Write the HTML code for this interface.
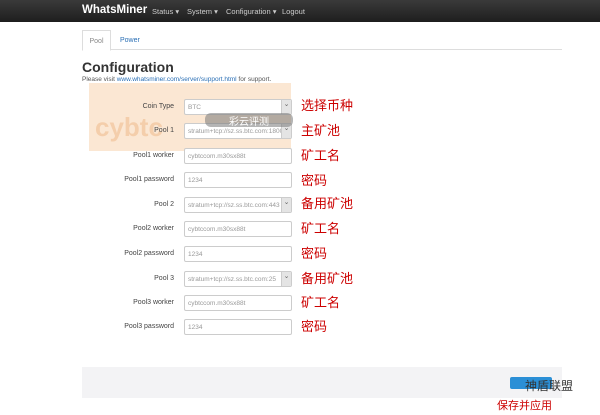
<!DOCTYPE html>
<html><head><meta charset="utf-8"><style>
*{margin:0;padding:0;box-sizing:border-box}
body{width:600px;height:415px;background:#fff;font-family:"Liberation Sans",sans-serif;position:relative;overflow:hidden}
.nav{position:absolute;left:0;top:0;width:600px;height:22px;background:linear-gradient(#3a3a3a,#1e1e1e);}
.nav span{position:absolute;color:#ccc;font-size:7.5px;top:7px}
.brand{color:#fff!important;font-size:11.5px!important;font-weight:bold;top:4px!important;left:82px}
.tabs{position:absolute;left:82px;top:30px;width:480px;height:20px;border-bottom:1px solid #ddd}
.tab{position:absolute;top:0;height:21px;font-size:7px;padding-top:7px}
.t1{left:0;width:29px;border:1px solid #ddd;border-bottom-color:#fff;background:#fff;color:#888;text-align:center}
.t2{left:38px;color:#2a6fb5}
h1{position:absolute;left:82px;top:59px;font-size:14px;color:#333;font-weight:bold}
.sup{position:absolute;left:82px;top:76px;font-size:6.5px;color:#555}
.sup a{color:#2a6fb5;text-decoration:none}
.wm{position:absolute;left:89px;top:83px;width:202px;height:68px;background:rgba(240,160,80,.25)}
.wm2{position:absolute;left:205px;top:113px;width:88px;height:14px;background:rgba(120,120,120,.55);border-radius:6px;color:#fff;font-size:10px;text-align:center;font-family:"Liberation Sans","Noto Sans CJK SC",sans-serif}
.cy{position:absolute;left:95px;top:112px;font-size:26px;font-weight:bold;color:rgba(230,150,80,.3)}
.lb{position:absolute;right:426px;font-size:7px;color:#444;text-align:right}
.in{position:absolute;left:184px;width:108px;height:16px;border:1px solid #ccc;border-radius:2px;font-size:6.5px;color:#999;padding:4px 0 0 3px;background:#fff;white-space:nowrap;overflow:hidden}
.sel::after{content:"⌄";position:absolute;right:0;top:0;width:9px;height:14px;background:#e4e4e4;border-left:1px solid #ccc;font-size:7px;text-align:center;color:#666}
.cn{position:absolute;left:301px;font-size:13px;color:#c00;font-family:"Liberation Sans","Noto Sans CJK SC",sans-serif}
.foot{position:absolute;left:82px;top:367px;width:480px;height:31px;background:#f3f3f5}
.btn{position:absolute;left:510px;top:377px;width:42px;height:12px;background:#2b8fd6;border-radius:2px}
.wx{position:absolute;left:525px;top:377px;font-size:12px;color:#333;font-family:"Liberation Sans","Noto Sans CJK SC",sans-serif}
.sv{position:absolute;left:497px;top:397px;font-size:11px;color:#c00;font-family:"Liberation Sans","Noto Sans CJK SC",sans-serif}
</style></head><body>
<div class="nav"><span class="brand">WhatsMiner</span><span style="left:152px">Status ▾</span><span style="left:187px">System ▾</span><span style="left:226px">Configuration ▾</span><span style="left:282px">Logout</span></div>
<div class="tabs"><div class="tab t1">Pool</div><div class="tab t2">Power</div></div>
<h1>Configuration</h1>
<div class="sup">Please visit <a>www.whatsminer.com/server/support.html</a> for support.</div>
<div class="wm"></div><div class="cy">cybtc</div>
<div class="lb" style="top:103px">Coin Type</div><div class="in sel" style="top:99px">BTC</div>
<div class="lb" style="top:127px">Pool 1</div><div class="in sel" style="top:123px">stratum+tcp://sz.ss.btc.com:1800</div>
<div class="wm2" style="top:113px">彩云评测</div>
<div class="lb" style="top:152px">Pool1 worker</div><div class="in" style="top:148px">cybtccom.m30sx88t</div>
<div class="lb" style="top:176px">Pool1 password</div><div class="in" style="top:172px">1234</div>
<div class="lb" style="top:201px">Pool 2</div><div class="in sel" style="top:197px">stratum+tcp://sz.ss.btc.com:443</div>
<div class="lb" style="top:225px">Pool2 worker</div><div class="in" style="top:221px">cybtccom.m30sx88t</div>
<div class="lb" style="top:250px">Pool2 password</div><div class="in" style="top:246px">1234</div>
<div class="lb" style="top:275px">Pool 3</div><div class="in sel" style="top:271px">stratum+tcp://sz.ss.btc.com:25</div>
<div class="lb" style="top:299px">Pool3 worker</div><div class="in" style="top:295px">cybtccom.m30sx88t</div>
<div class="lb" style="top:323px">Pool3 password</div><div class="in" style="top:319px">1234</div>
<div class="cn" style="top:95px">选择币种</div>
<div class="cn" style="top:120px">主矿池</div>
<div class="cn" style="top:145px">矿工名</div>
<div class="cn" style="top:170px">密码</div>
<div class="cn" style="top:193px">备用矿池</div>
<div class="cn" style="top:218px">矿工名</div>
<div class="cn" style="top:243px">密码</div>
<div class="cn" style="top:268px">备用矿池</div>
<div class="cn" style="top:292px">矿工名</div>
<div class="cn" style="top:316px">密码</div>
<div class="foot"></div><div class="btn"></div>
<div class="wx">神盾联盟</div>
<div class="sv">保存并应用</div>
</body></html>
